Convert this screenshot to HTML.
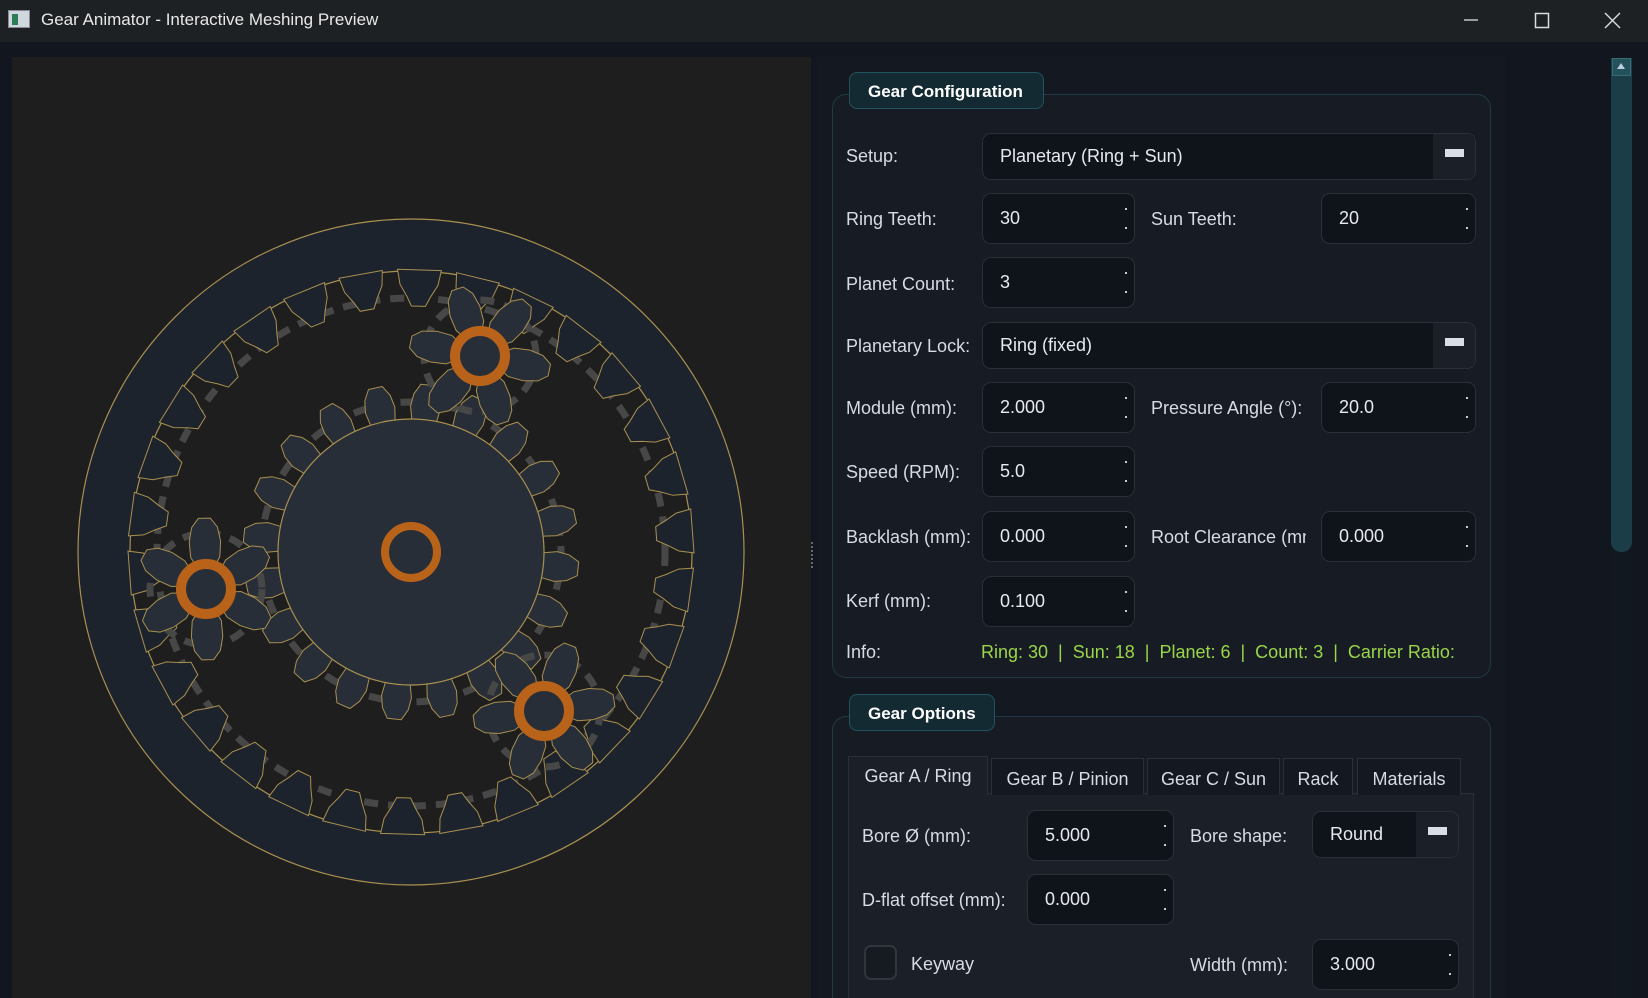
<!DOCTYPE html>
<html><head><meta charset="utf-8">
<style>
*{box-sizing:border-box;margin:0;padding:0}
html{width:1648px;height:998px;overflow:hidden}
body{width:1648px;height:998px;background:#12161e;font-family:"Liberation Sans",sans-serif;color:#d6dbe4;position:relative;overflow:hidden;font-size:18px}
.title{position:absolute;left:0;top:0;width:1648px;height:42px;background:#1d2123;}
.title .t{position:absolute;left:41px;top:10px;font-size:17px;color:#e8e8e8}
.title .ic{position:absolute;left:8px;top:10px;width:22px;height:18px;background:#cfd8dc;border:1px solid #889}
.title .ic:after{content:"";position:absolute;left:3px;top:3px;width:6px;height:11px;background:#2e7d5a}
.abs{position:absolute}
.canvas{position:absolute;left:12px;top:57px;width:799px;height:941px;background:#1e1e1e}
.panel{position:absolute;left:817px;top:57px;width:689px;height:941px;background:#141820}
.grp{position:absolute;border:1px solid #1f3a44;border-radius:14px;background:#161b24}
.tab{position:absolute;background:#142a33;border:1px solid #21525e;border-radius:8px;font-weight:bold;color:#fff;font-size:17px;padding:9px 0 0 18px;height:37px;white-space:nowrap}
.lbl{position:absolute;font-size:18px;color:#d6dbe4;white-space:nowrap}
.box{position:absolute;background:#0f131a;border:1px solid #2a2f38;border-radius:9px;font-size:18px;color:#e6e9ee;padding-left:17px;display:flex;align-items:center}
.box .sp{position:absolute;right:0;top:0;width:18px;height:100%;border-left:1px solid #0f131a}
.box .sp:before,.box .sp:after{content:"";position:absolute;left:8px;width:2px;height:2px;background:#ccc}
.box .sp:before{top:28%}.box .sp:after{top:68%}
.box .dd{position:absolute;right:0;top:0;width:42px;height:100%;background:#1b1f27;border-radius:0 9px 9px 0}
.box .dd:after{content:"";position:absolute;left:12px;top:15px;width:19px;height:8px;background:#d9dde6}
.gt{position:absolute;height:37px;border:1px solid #2a2f38;border-bottom:none;background:#141820;font-size:18px;color:#d6dbe4;text-align:center;padding-top:9px;white-space:nowrap}
</style></head><body>
<div class="title"><div class="ic"></div><div class="t">Gear Animator - Interactive Meshing Preview</div>
<svg class="abs" style="left:1460px;top:10px" width="180" height="22"><line x1="4" y1="10" x2="18" y2="10" stroke="#ddd" stroke-width="1.3"/><rect x="75.5" y="3.5" width="13" height="14" fill="none" stroke="#ddd" stroke-width="1.5"/><path d="M145 3 L160 18 M160 3 L145 18" stroke="#ddd" stroke-width="1.4"/></svg>
</div>
<div class="canvas"><svg id="g" width="799" height="941"></svg></div>
<div class="abs" style="left:811px;top:542px;width:4px;height:26px;border-left:2px dotted #666"></div>
<div class="panel"></div>
<div class="abs" style="left:1611px;top:58px;width:21px;height:940px;background:#111820"></div>
<div class="abs" style="left:1611px;top:58px;width:21px;height:494px;background:#1a3d47;border-radius:0 0 10px 10px"></div>
<div class="abs" style="left:1612px;top:58px;width:19px;height:18px;background:#23525d;border:1px solid #3a6b76"></div>
<div class="abs" style="left:1617px;top:63px;width:0;height:0;border-left:4px solid transparent;border-right:4px solid transparent;border-bottom:6px solid #bcd"></div>

<div class="grp" style="left:832px;top:94px;width:659px;height:584px"></div>
<div class="tab" style="left:849px;top:72px;width:195px">Gear Configuration</div>
<div class="lbl" style="left:846px;top:146px">Setup:</div>
<div class="box" style="left:982px;top:133px;width:494px;height:47px">Planetary (Ring + Sun)<div class="dd"></div></div>
<div class="lbl" style="left:846px;top:209px">Ring Teeth:</div>
<div class="box" style="left:982px;top:193px;width:153px;height:51px">30<div class="sp"></div></div>
<div class="lbl" style="left:1151px;top:209px">Sun Teeth:</div>
<div class="box" style="left:1321px;top:193px;width:155px;height:51px">20<div class="sp"></div></div>
<div class="lbl" style="left:846px;top:274px">Planet Count:</div>
<div class="box" style="left:982px;top:257px;width:153px;height:51px">3<div class="sp"></div></div>
<div class="lbl" style="left:846px;top:336px">Planetary Lock:</div>
<div class="box" style="left:982px;top:322px;width:494px;height:47px">Ring (fixed)<div class="dd"></div></div>
<div class="lbl" style="left:846px;top:398px">Module (mm):</div>
<div class="box" style="left:982px;top:382px;width:153px;height:51px">2.000<div class="sp"></div></div>
<div class="lbl" style="left:1151px;top:398px">Pressure Angle (°):</div>
<div class="box" style="left:1321px;top:382px;width:155px;height:51px">20.0<div class="sp"></div></div>
<div class="lbl" style="left:846px;top:462px">Speed (RPM):</div>
<div class="box" style="left:982px;top:446px;width:153px;height:51px">5.0<div class="sp"></div></div>
<div class="lbl" style="left:846px;top:527px">Backlash (mm):</div>
<div class="box" style="left:982px;top:511px;width:153px;height:51px">0.000<div class="sp"></div></div>
<div class="lbl" style="left:1151px;top:527px;width:155px;overflow:hidden">Root Clearance (mm</div>
<div class="box" style="left:1321px;top:511px;width:155px;height:51px">0.000<div class="sp"></div></div>
<div class="lbl" style="left:846px;top:591px">Kerf (mm):</div>
<div class="box" style="left:982px;top:576px;width:153px;height:51px">0.100<div class="sp"></div></div>
<div class="lbl" style="left:846px;top:642px">Info:</div>
<div class="lbl" style="left:981px;top:642px;color:#9ad54a;width:494px;overflow:hidden">Ring: 30 &nbsp;| &nbsp;Sun: 18 &nbsp;| &nbsp;Planet: 6 &nbsp;| &nbsp;Count: 3 &nbsp;| &nbsp;Carrier Ratio:</div>

<div class="grp" style="left:832px;top:716px;width:659px;height:282px;border-bottom:none;border-radius:14px 14px 0 0"></div>
<div class="tab" style="left:849px;top:694px;width:146px">Gear Options</div>
<div class="abs" style="left:848px;top:793px;width:626px;height:205px;background:#1b1f28;border:1px solid #2a2f38;border-bottom:none"></div>
<div class="gt" style="left:848px;top:756px;width:140px;height:39px;background:#1b1f28;padding-top:9px">Gear A / Ring</div>
<div class="gt" style="left:991px;top:758px;width:153px;padding-top:10px">Gear B / Pinion</div>
<div class="gt" style="left:1147px;top:758px;width:133px;padding-top:10px">Gear C / Sun</div>
<div class="gt" style="left:1283px;top:758px;width:70px;padding-top:10px">Rack</div>
<div class="gt" style="left:1357px;top:758px;width:104px;padding-top:10px">Materials</div>
<div class="lbl" style="left:862px;top:826px">Bore Ø (mm):</div>
<div class="box" style="left:1027px;top:810px;width:147px;height:51px">5.000<div class="sp"></div></div>
<div class="lbl" style="left:1190px;top:826px">Bore shape:</div>
<div class="box" style="left:1312px;top:811px;width:147px;height:47px">Round<div class="dd"></div></div>
<div class="lbl" style="left:862px;top:890px">D-flat offset (mm):</div>
<div class="box" style="left:1027px;top:874px;width:147px;height:51px">0.000<div class="sp"></div></div>
<div class="abs" style="left:864px;top:945px;width:33px;height:35px;border:2px solid #30353e;border-radius:7px;background:#161a21"></div>
<div class="lbl" style="left:911px;top:954px">Keyway</div>
<div class="lbl" style="left:1190px;top:955px">Width (mm):</div>
<div class="box" style="left:1312px;top:939px;width:147px;height:51px">3.000<div class="sp"></div></div>

<script>
var S='',G='#a89050';
function P(a,r,cx,cy){return [cx+r*Math.cos(a),cy+r*Math.sin(a)]}
function f(p){return p[0].toFixed(1)+','+p[1].toFixed(1)}
function dash(cx,cy,r){S+='<circle cx="'+cx+'" cy="'+cy+'" r="'+r+'" fill="none" stroke="#474747" stroke-width="7" stroke-dasharray="14 10"/>'}
function tooth(cx,cy,a,prof,fill){var L=[],R=[];prof.forEach(function(q){var da=q[1]/q[0];L.push(P(a-da,q[0],cx,cy));R.unshift(P(a+da,q[0],cx,cy));});
var pts=L.concat(R);S+='<polygon points="'+pts.map(f).join(' ')+'" fill="'+fill+'" stroke="'+G+'" stroke-width="1"/>'}
var cx=399,cy=495;
S+='<circle cx="'+cx+'" cy="'+cy+'" r="333" fill="#1d232c" stroke="'+G+'" stroke-width="1.2"/>';
S+='<circle cx="'+cx+'" cy="'+cy+'" r="281" fill="#1e1e1e" stroke="'+G+'" stroke-width="1.2"/>';
dash(cx,cy,254);
for(var i=0;i<30;i++){var a=i*2*Math.PI/30-Math.PI/2+0.03;tooth(cx,cy,a,[[283,22],[268,19],[256,12],[246,7]],'#1d232c');}
dash(cx,cy,150);
for(var i=0;i<20;i++){var a=i*2*Math.PI/20-Math.PI/2+0.1;tooth(cx,cy,a,[[130,12],[146,15],[158,13],[168,7]],'#272e37');}
S+='<circle cx="'+cx+'" cy="'+cy+'" r="133" fill="#272e37" stroke="'+G+'" stroke-width="1.2"/>';
[[468,299,0.2],[194,532,0.5],[532,654,0.9]].forEach(function(p){
dash(p[0],p[1],56);
for(var i=0;i<6;i++){var a=i*Math.PI/3+p[2];tooth(p[0],p[1],a,[[22,8],[35,15],[50,16],[63,13],[71,6]],'#272e37');}
S+='<circle cx="'+p[0]+'" cy="'+p[1]+'" r="25" fill="#272e37" stroke="#b8621a" stroke-width="10"/>';});
S+='<circle cx="'+cx+'" cy="'+cy+'" r="26" fill="#272e37" stroke="#b8621a" stroke-width="8"/>';
document.getElementById('g').innerHTML=S;
</script>
</body></html>
